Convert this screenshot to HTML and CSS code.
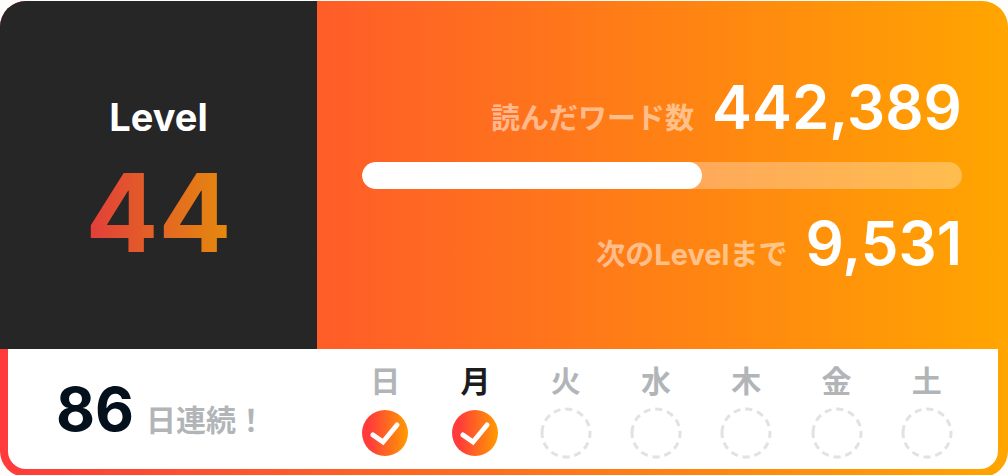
FILE: index.html
```html
<!DOCTYPE html>
<html lang="ja">
<head>
  <meta charset="UTF-8">
  <meta name="viewport" content="width=device-width, initial-scale=1">
  <title>Level 44</title>
  <link rel="stylesheet" href="styles.css">
</head>
<body>
  <svg class="defs" width="0" height="0" aria-hidden="true">
    <defs>
      <linearGradient id="fire" x1="0" y1="0" x2="1" y2="0">
        <stop offset="0.15" stop-color="#ff3b3b"/>
        <stop offset="1" stop-color="#ff9c00"/>
      </linearGradient>
      <symbol id="done" viewBox="0 0 52 52">
        <circle cx="26" cy="26" r="23" fill="url(#fire)"/>
        <path d="M14 28l10 7 14-17" fill="none" stroke="#fff" stroke-width="5" stroke-linecap="round" stroke-linejoin="miter"/>
      </symbol>
      <symbol id="empty" viewBox="0 0 52 52">
        <circle cx="26" cy="26" r="24" fill="none" stroke="#e2e2e4" stroke-width="3" pathLength="362" stroke-dasharray="31 12 17 12 17 12 17 12 17 12 17 12 17 12 17 12 17 12 17 12 17 12 17 12" transform="rotate(168 26 26)"/>
      </symbol>
    </defs>
  </svg>

  <main class="card">
    <section class="top">
      <div class="level">
        <h1 class="level-label">Level</h1>
        <p class="level-number">44</p>
      </div>
      <div class="stats">
        <p class="stat"><label class="stat-label" for="words">読んだワード数</label><strong class="stat-value">442,389</strong></p>
        <progress class="bar" id="words" value="12469" max="22000"></progress>
        <p class="stat"><span class="stat-label">次のLevelまで</span><strong class="stat-value">9,531</strong></p>
      </div>
    </section>

    <section class="bottom">
      <p class="streak"><strong class="streak-days">86</strong><span class="streak-label">日連続！</span></p>
      <ul class="week">
        <li class="day">日<svg class="mark"><use href="#done"/></svg></li>
        <li class="day today">月<svg class="mark"><use href="#done"/></svg></li>
        <li class="day">火<svg class="mark"><use href="#empty"/></svg></li>
        <li class="day">水<svg class="mark"><use href="#empty"/></svg></li>
        <li class="day">木<svg class="mark"><use href="#empty"/></svg></li>
        <li class="day">金<svg class="mark"><use href="#empty"/></svg></li>
        <li class="day">土<svg class="mark"><use href="#empty"/></svg></li>
      </ul>
    </section>
  </main>
</body>
</html>
```
FILE: styles.css
```css
* {
  box-sizing: border-box;
  margin: 0;
  padding: 0;
}

body {
  height: 100vh;
  overflow: hidden;
  padding-top: 1px;
  background: #fdfdfb;
  font-family: Inter, "Noto Sans CJK JP", sans-serif;
}

.defs {
  display: block;
}

.card {
  overflow: hidden;
  padding-bottom: 8px;
  border-radius: 26px;
  background: linear-gradient(90deg, #ff3b3b, #ffa500);
}

.top {
  display: flex;
}

/* 左側：レベル */
.level {
  display: flex;
  flex: 0 0 317px;
  flex-direction: column;
  align-items: center;
  gap: 10px;
  padding: 92px 0 74px;
  background: #262626;
}

.level-label {
  color: #fff;
  font-size: 38px;
  font-weight: 700;
  line-height: 48px;
}

.level-number {
  background: linear-gradient(90deg, #e23c3c, #e58c0c);
  background-clip: text;
  -webkit-background-clip: text;
  color: transparent;
  font-size: 108px;
  font-weight: 700;
  line-height: 124px;
}

/* 右側：ワード数と進捗 */
.stats {
  flex: 1;
  padding: 70px 46px 0 45px;
}

.stat {
  display: flex;
  align-items: baseline;
  justify-content: flex-end;
  gap: 18px;
  line-height: 72px;
}

.stat-label {
  color: rgba(255, 255, 255, 0.5);
  font-size: 29px;
  font-weight: 700;
}

.stat-value {
  color: #fff;
  font-size: 60px;
  font-weight: 600;
}

.bar {
  display: block;
  width: 100%;
  height: 27px;
  margin: 7px 0 18px;
  overflow: hidden;
  appearance: none;
  border: none;
  border-radius: 14px;
  background: rgba(255, 255, 255, 0.3);
}

.bar::-webkit-progress-bar {
  background: transparent;
}

.bar::-webkit-progress-value {
  border-radius: 14px;
  background: #fff;
}

/* 連続日数 */
.bottom {
  display: flex;
  height: 120px;
  margin: 0 10px 0 8px;
  border-radius: 0 0 18px 18px;
  background: #fff;
}

.streak {
  display: flex;
  flex: 0 0 332px;
  align-items: baseline;
  gap: 12px;
  padding-left: 48px;
  line-height: 120px;
}

.streak-days {
  color: #04101c;
  font-size: 60px;
  font-weight: 700;
}

.streak-label {
  color: #b2b5b8;
  font-size: 30px;
  font-weight: 700;
}

.week {
  display: grid;
  flex: 1;
  grid-template-columns: repeat(7, 1fr);
  padding: 14px 26px 0 0;
  list-style: none;
}

.day {
  display: flex;
  flex-direction: column;
  align-items: center;
  gap: 8px;
  color: #b2b5b8;
  font-size: 30px;
  font-weight: 700;
  line-height: 36px;
}

.today {
  color: #1c1c1c;
}

.mark {
  width: 52px;
  height: 52px;
}
```
